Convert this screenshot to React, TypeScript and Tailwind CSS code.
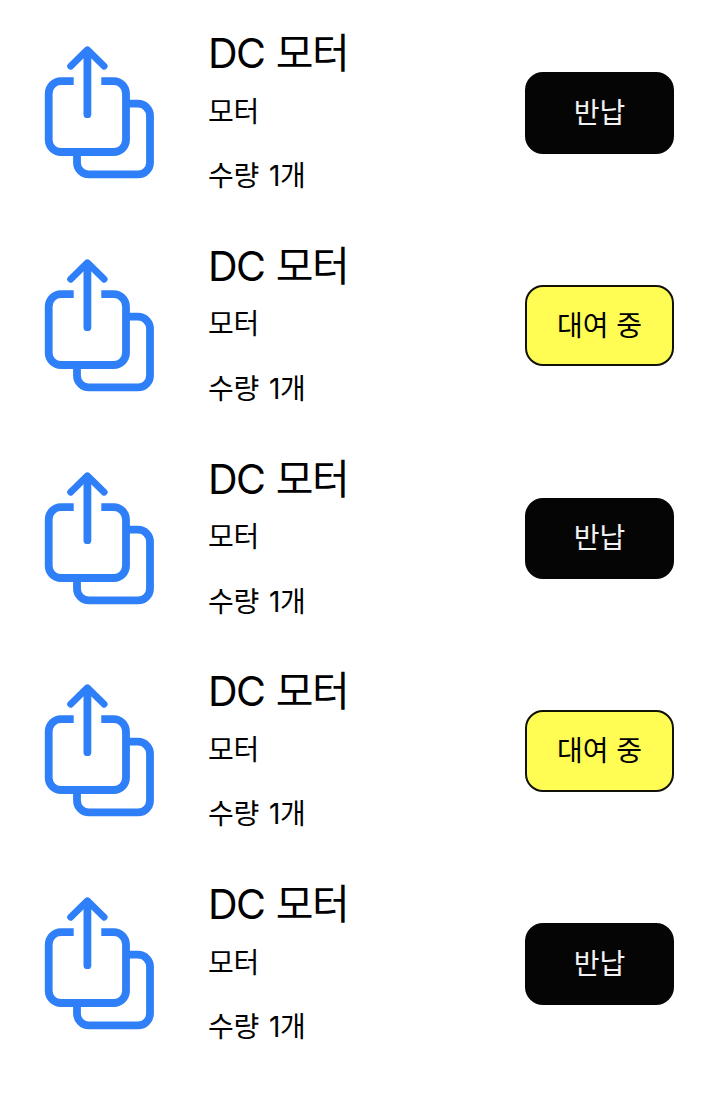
interface Rental {
 id: number;
 name: string;
 category: string;
 count: number;
 status: 'return' | 'rented';
}

const rentals: Rental[] = [
 { id: 1, name: 'DC 모터', category: '모터', count: 1, status: 'return' },
 { id: 2, name: 'DC 모터', category: '모터', count: 1, status: 'rented' },
 { id: 3, name: 'DC 모터', category: '모터', count: 1, status: 'return' },
 { id: 4, name: 'DC 모터', category: '모터', count: 1, status: 'rented' },
 { id: 5, name: 'DC 모터', category: '모터', count: 1, status: 'return' },
];

const badgeStyles = {
 return: 'bg-[#050505] text-[#f2f2f2] border-[#050505]',
 rented: 'bg-[#fffd54] text-black border-[#111105]',
};

const badgeLabels = {
 return: '반납',
 rented: '대여 중',
};

function ShareIcon() {
 return (
  <svg
   className="mt-[45px] h-[134px] w-[111px] shrink-0"
   viewBox="44 45 111 134"
   fill="none"
   stroke="#2f7ff8"
   strokeWidth={7.8}
  >
   {/* back sheet */}
   <path d="M126 103.7h12a12 12 0 0 1 12 12v46.7a12 12 0 0 1-12 12H89a12 12 0 0 1-12-12V152" />
   {/* front sheet, open at the top for the arrow */}
   <path d="M73.7 81.2H61a12.3 12.3 0 0 0-12.3 12.3v46.2A12.3 12.3 0 0 0 61 152h52.7a12.3 12.3 0 0 0 12.3-12.3V93.5a12.3 12.3 0 0 0-12.3-12.3h-12.4" />
   <path d="M87.4 52v62.2" strokeLinecap="round" />
   <path d="M70.6 66.2l16.8-16.4L104.2 66.2" strokeWidth={6.8} strokeLinecap="round" strokeLinejoin="round" />
  </svg>
 );
}

function RentalRow({ rental }: { rental: Rental }) {
 return (
  <li className="flex h-[212.75px] items-start pr-[50px] pl-11">
   <ShareIcon />
   <div className="ml-[53px] flex-1 whitespace-nowrap">
    <h2 className="mt-[27px] text-[41px] leading-[52px] tracking-[-1.6px] [word-spacing:1.5px]">{rental.name}</h2>
    <p className="mt-[12.5px] text-[28px] leading-[40px] tracking-[-0.3px]">{rental.category}</p>
    <p className="mt-[24.5px] text-[28px] leading-[40px] tracking-[-0.3px] [word-spacing:2.5px]">수량 {rental.count}개</p>
   </div>
   <button
    className={`mt-[72px] h-[81.5px] w-[149px] rounded-[18px] border-2 text-[28px] ${badgeStyles[rental.status]}`}
   >
    {badgeLabels[rental.status]}
   </button>
  </li>
 );
}

export default function App() {
 return (
  <main className="min-h-screen bg-white font-['Inter','Noto_Sans_CJK_KR',sans-serif] text-black">
   <ul>
    {rentals.map(rental => (
     <RentalRow key={rental.id} rental={rental} />
    ))}
   </ul>
  </main>
 );
}
